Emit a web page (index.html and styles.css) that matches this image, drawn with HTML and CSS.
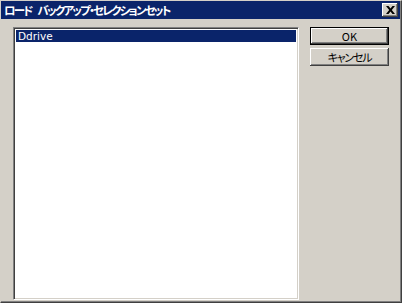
FILE: index.html
```html
<!DOCTYPE html>
<html lang="ja">
<head>
<meta charset="utf-8">
<title>ロード バックアップ・セレクションセット</title>
<link rel="stylesheet" href="styles.css">
</head>
<body>
<div class="window">
  <div class="titlebar">
    <span class="title">ロード バックアップ・セレクションセット</span>
    <button class="close" aria-label="閉じる">
      <svg width="9" height="8" viewBox="0 0 9 8"><path d="M0 0h2.5l2 2.4 2-2.4h2.5l-3.2 4 3.2 4h-2.5l-2-2.4-2 2.4h-2.5l3.2-4z" fill="#000"/></svg>
    </button>
  </div>
  <div class="body">
    <div class="listbox">
      <div class="item selected">Ddrive</div>
    </div>
    <div class="buttons">
      <button class="btn default">OK</button>
      <button class="btn cancel">キャンセル</button>
    </div>
  </div>
</div>
</body>
</html>
```
FILE: styles.css
```css
html, body {
  margin: 0;
  padding: 0;
  background: #d4d0c8;
}
.window {
  width: 402px;
  height: 303px;
  box-sizing: border-box;
  background: #d4d0c8;
  border-top: 1px solid #d4d0c8;
  border-left: 1px solid #d4d0c8;
  border-right: 1px solid #404040;
  border-bottom: 1px solid #404040;
  box-shadow: inset -1px -1px 0 #808080;
  display: flex;
  flex-direction: column;
}
.titlebar {
  height: 18px;
  margin-right: 1px;
  background: #0a246a;
  display: flex;
  align-items: center;
  justify-content: space-between;
  padding: 0 2px 0 3px;
}
.title {
  color: #fff;
  font-family: "Noto Sans CJK JP", sans-serif;
  font-weight: bold;
  font-size: 11.5px;
  font-feature-settings: "palt";
  letter-spacing: -1.8px;
  word-spacing: 5px;
  line-height: 18px;
  white-space: nowrap;
}
.close {
  width: 16px;
  height: 14px;
  padding: 0;
  margin: 0;
  background: #d4d0c8;
  border: none;
  box-shadow: inset -1px -1px 0 #404040, inset 1px 1px 0 #fff, inset -2px -2px 0 #808080;
  display: flex;
  align-items: center;
  justify-content: center;
}
.close svg { display: block; }
.body {
  flex: 1;
  display: flex;
  padding: 8px 11px 2px 12px;
  gap: 11px;
}
.listbox {
  width: 286px;
  box-sizing: border-box;
  background: #fff;
  border-top: 1px solid #808080;
  border-left: 1px solid #808080;
  border-right: 1px solid #fff;
  border-bottom: 1px solid #fff;
  box-shadow: inset 1px 1px 0 #404040, inset -1px -1px 0 #d4d0c8;
  padding: 2px;
}
.item {
  height: 12px;
  line-height: 12px;
  padding-left: 2px;
  font-family: "DejaVu Sans", sans-serif;
  font-size: 10.5px;
  color: #000;
}
.item.selected {
  background: #0a246a;
  color: #fff;
}
.buttons {
  display: flex;
  flex-direction: column;
  gap: 3px;
}
.btn {
  width: 79px;
  height: 18px;
  padding: 0;
  margin: 0;
  border: none;
  background: #d4d0c8;
  font-family: "Noto Sans CJK JP", sans-serif;
  font-feature-settings: "palt";
  font-size: 11px;
  color: #000;
  line-height: 16px;
  box-shadow: inset -1px -1px 0 #404040, inset 1px 1px 0 #fff, inset -2px -2px 0 #808080;
}
.btn.cancel {
  letter-spacing: -1.2px;
}
.btn.default {
  box-shadow: 0 0 0 1px #000, inset -1px -1px 0 #404040, inset 1px 1px 0 #fff, inset -2px -2px 0 #808080;
  margin: 1px 0;
  width: 77px;
  height: 16px;
  align-self: center;
}
```
